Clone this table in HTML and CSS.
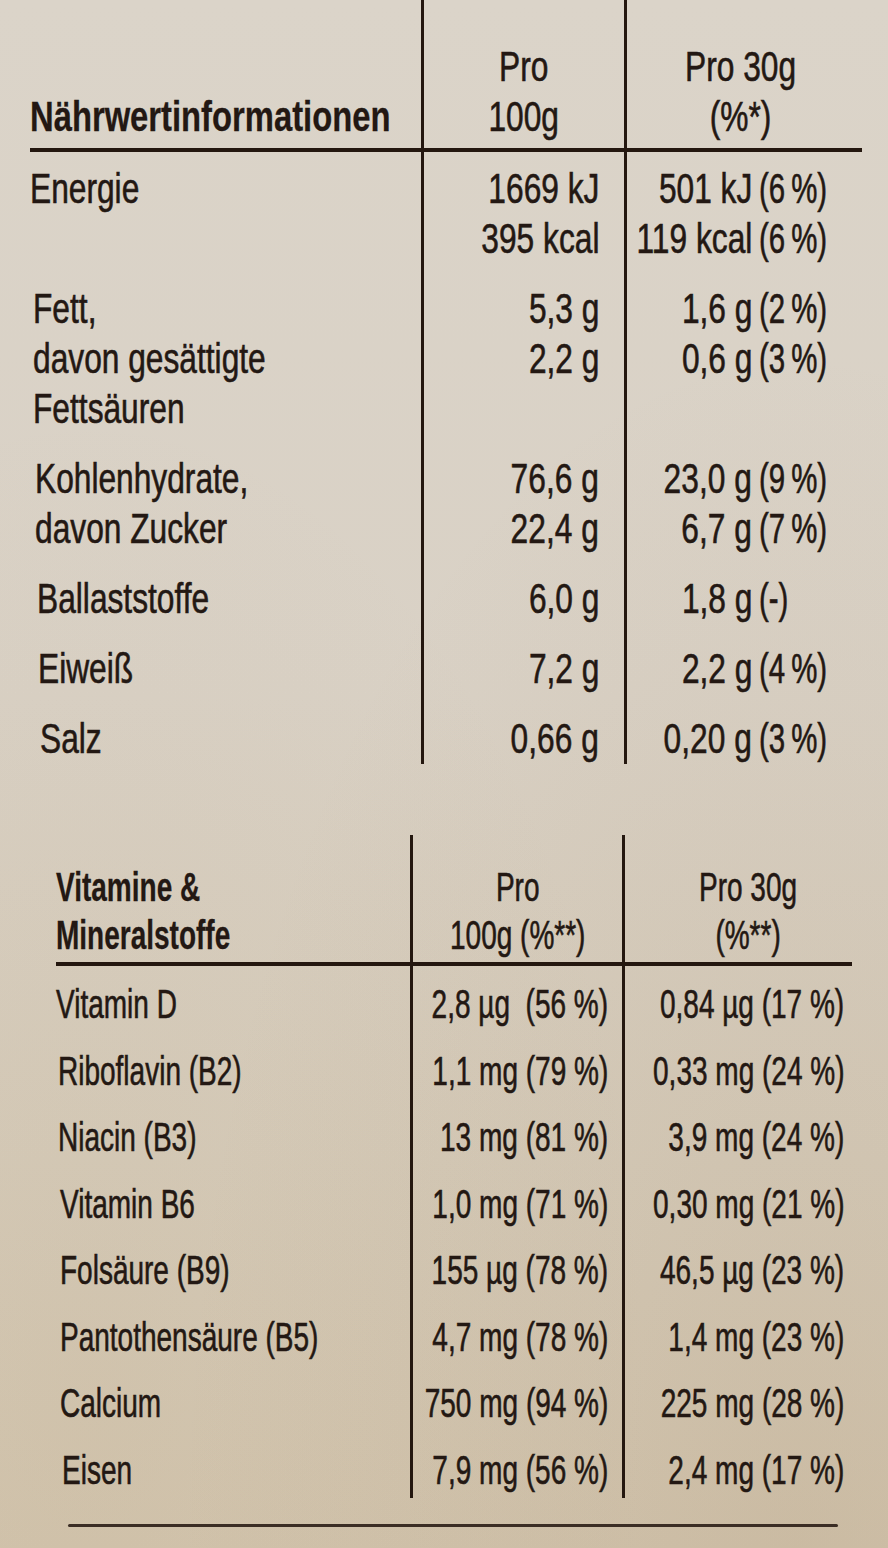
FILE: index.html
```html
<!DOCTYPE html>
<html lang="de">
<head>
<meta charset="utf-8">
<title>Nährwertinformationen</title>
<link rel="stylesheet" href="styles.css">
</head>
<body>
<main class="label">
  <section class="table t1">
    <div class="row head">
      <div class="cell name bottom"><strong class="tx bold">Nährwertinformationen</strong></div>
      <div class="cell v1 center"><span class="tx">Pro<br>100g</span></div>
      <div class="cell v2 center span2"><span class="tx">Pro 30g<br>(%*)</span></div>
    </div>
    <div class="row first">
      <div class="cell name"><span class="tx">Energie</span></div>
      <div class="cell v1"><span class="tx">1669 kJ<br>395 kcal</span></div>
      <div class="cell v2"><span class="tx">501 kJ<br>119 kcal</span></div>
      <div class="cell pct"><span class="tx">(6 %)<br>(6 %)</span></div>
    </div>
    <div class="row">
      <div class="cell name"><span class="tx">Fett,<br>davon gesättigte<br>Fettsäuren</span></div>
      <div class="cell v1"><span class="tx">5,3 g<br>2,2 g</span></div>
      <div class="cell v2"><span class="tx">1,6 g<br>0,6 g</span></div>
      <div class="cell pct"><span class="tx">(2 %)<br>(3 %)</span></div>
    </div>
    <div class="row">
      <div class="cell name"><span class="tx">Kohlenhydrate,<br>davon Zucker</span></div>
      <div class="cell v1"><span class="tx">76,6 g<br>22,4 g</span></div>
      <div class="cell v2"><span class="tx">23,0 g<br>6,7 g</span></div>
      <div class="cell pct"><span class="tx">(9 %)<br>(7 %)</span></div>
    </div>
    <div class="row">
      <div class="cell name"><span class="tx">Ballaststoffe</span></div>
      <div class="cell v1"><span class="tx">6,0 g</span></div>
      <div class="cell v2"><span class="tx">1,8 g</span></div>
      <div class="cell pct"><span class="tx">(-)</span></div>
    </div>
    <div class="row">
      <div class="cell name"><span class="tx">Eiweiß</span></div>
      <div class="cell v1"><span class="tx">7,2 g</span></div>
      <div class="cell v2"><span class="tx">2,2 g</span></div>
      <div class="cell pct"><span class="tx">(4 %)</span></div>
    </div>
    <div class="row last">
      <div class="cell name"><span class="tx">Salz</span></div>
      <div class="cell v1"><span class="tx">0,66 g</span></div>
      <div class="cell v2"><span class="tx">0,20 g</span></div>
      <div class="cell pct"><span class="tx">(3 %)</span></div>
    </div>
  </section>

  <section class="table t2">
    <div class="row head">
      <div class="cell name"><strong class="tx bold">Vitamine &amp;<br>Mineralstoffe</strong></div>
      <div class="cell v1 center"><span class="tx">Pro<br>100g (%**)</span></div>
      <div class="cell v2 center"><span class="tx">Pro 30g<br>(%**)</span></div>
    </div>
    <div class="row"><div class="cell name"><span class="tx">Vitamin D</span></div><div class="cell v1"><span class="tx">2,8 µg&nbsp; (56 %)</span></div><div class="cell v2"><span class="tx">0,84 µg (17 %)</span></div></div>
    <div class="row"><div class="cell name"><span class="tx">Riboflavin (B2)</span></div><div class="cell v1"><span class="tx">1,1 mg (79 %)</span></div><div class="cell v2"><span class="tx">0,33 mg (24 %)</span></div></div>
    <div class="row"><div class="cell name"><span class="tx">Niacin (B3)</span></div><div class="cell v1"><span class="tx">13 mg (81 %)</span></div><div class="cell v2"><span class="tx">3,9 mg (24 %)</span></div></div>
    <div class="row"><div class="cell name"><span class="tx">Vitamin B6</span></div><div class="cell v1"><span class="tx">1,0 mg (71 %)</span></div><div class="cell v2"><span class="tx">0,30 mg (21 %)</span></div></div>
    <div class="row"><div class="cell name"><span class="tx">Folsäure (B9)</span></div><div class="cell v1"><span class="tx">155 µg (78 %)</span></div><div class="cell v2"><span class="tx">46,5 µg (23 %)</span></div></div>
    <div class="row"><div class="cell name"><span class="tx">Pantothensäure (B5)</span></div><div class="cell v1"><span class="tx">4,7 mg (78 %)</span></div><div class="cell v2"><span class="tx">1,4 mg (23 %)</span></div></div>
    <div class="row"><div class="cell name"><span class="tx">Calcium</span></div><div class="cell v1"><span class="tx">750 mg (94 %)</span></div><div class="cell v2"><span class="tx">225 mg (28 %)</span></div></div>
    <div class="row"><div class="cell name"><span class="tx">Eisen</span></div><div class="cell v1"><span class="tx">7,9 mg (56 %)</span></div><div class="cell v2"><span class="tx">2,4 mg (17 %)</span></div></div>
  </section>

  <div class="rule"></div>
</main>
</body>
</html>
```

FILE: styles.css
```css
* {
  box-sizing: border-box;
}

html,
body {
  margin: 0;
  padding: 0;
}

body {
  width: 888px;
  height: 1548px;
  overflow: hidden;
  color: #231813;
  font-family: "Liberation Sans", Arial, sans-serif;
  background:
    radial-gradient(ellipse at 90% 100%, rgba(150, 118, 78, 0.14), rgba(150, 118, 78, 0) 55%),
    radial-gradient(ellipse at 10% 90%, rgba(170, 140, 95, 0.10), rgba(170, 140, 95, 0) 50%),
    linear-gradient(180deg, #dbd4c9 0%, #d9d1c5 45%, #d6ccbb 75%, #d3c6b0 100%);
}

.label {
  display: flex;
  flex-direction: column;
}

.row {
  display: grid;
  white-space: nowrap;
}

.cell {
  display: flex;
  align-items: flex-start;
  justify-content: flex-start;
}

/* condensed lettering: the print face is a narrow grotesque */
.tx {
  display: inline-block;
  transform: scaleX(var(--sx));
  transform-origin: left center;
  -webkit-text-stroke: 0.6px currentColor;
}

.bold {
  font-weight: 700;
  transform: scaleX(var(--sxb));
  -webkit-text-stroke: 0.3px currentColor;
}

.v1,
.v2 {
  justify-content: flex-end;
  text-align: right;
}

.v1 .tx,
.v2 .tx {
  transform-origin: right center;
}

.center {
  justify-content: center;
  text-align: center;
}

.center .tx {
  transform-origin: center center;
}

/* ---------- table 1 ---------- */
.t1 {
  --sx: 0.755;
  --sxb: 0.78;
  margin-left: 30px;
  font-size: 42px;
  line-height: 50px;
}

.t1 .row {
  grid-template-columns: 391px 203px 128px 110px;
}

.t1 .cell {
  padding-top: 20px;
}

.t1 .head .cell {
  padding-top: 42px;
  padding-bottom: 6px;
  border-bottom: 4px solid #24170f;
}

.t1 .head .name {
  align-items: flex-end;
}

.t1 .first .cell {
  padding-top: 12px;
}

/* the printed sheet is photographed at a slight angle */
.t1 .row:nth-child(3) .name { padding-left: 3px; }
.t1 .row:nth-child(4) .name { padding-left: 5px; }
.t1 .row:nth-child(5) .name { padding-left: 7px; }
.t1 .row:nth-child(6) .name { padding-left: 8px; }
.t1 .row:nth-child(7) .name { padding-left: 10px; }

.t1 .v1 {
  border-left: 3px solid #24170f;
  padding-right: 25px;
}

.t1 .v2 {
  border-left: 3px solid #24170f;
}

.t1 .head .v1 {
  padding-right: 0;
}

.t1 .span2 {
  grid-column: 3 / 5;
  padding-right: 8px;
}

.t1 .pct {
  padding-left: 7px;
}

.t1 .pct .tx {
  transform: scaleX(0.7);
  word-spacing: -3px;
}

/* ---------- table 2 ---------- */
.t2 {
  --sx: 0.70;
  --sxb: 0.70;
  margin-top: 71px;
  margin-left: 56px;
  font-size: 40px;
  line-height: 48px;
}

.t2 .row {
  grid-template-columns: 354px 212px 230px;
}

.t2 .cell {
  padding-top: 14px;
  padding-bottom: 4.5px;
}

.t2 .head .cell {
  padding-top: 28px;
  padding-bottom: 3px;
  border-bottom: 4px solid #24170f;
}

.t2 .row:nth-child(n+3) .name { padding-left: 2px; }
.t2 .row:nth-child(n+5) .name { padding-left: 4px; }
.t2 .row:nth-child(n+9) .name { padding-left: 6px; }

.t2 .v1 {
  border-left: 3px solid #24170f;
  padding-right: 14px;
}

.t2 .v2 {
  border-left: 3px solid #24170f;
  padding-right: 8px;
}

.t2 .head .v1 {
  padding-right: 0;
}

.t2 .head .v2 {
  padding-right: 0;
  padding-left: 20px;
}

/* ---------- bottom rule ---------- */
.rule {
  margin: 26px 0 0 68px;
  width: 770px;
  height: 3px;
  background: #3b2d24;
  border-radius: 2px;
}
```
